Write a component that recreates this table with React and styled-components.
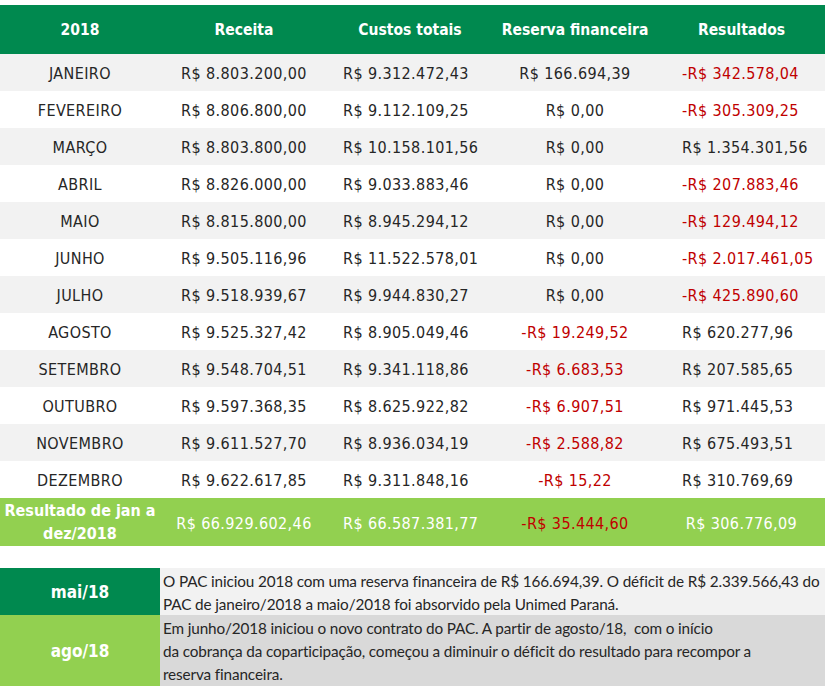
import React from "react";
import styled, { createGlobalStyle } from "styled-components";

const GlobalStyle = createGlobalStyle`
  html, body {
    margin: 0;
    padding: 0;
    background: #ffffff;
  }
`;

const DARK_GREEN = "#00894f";
const LIGHT_GREEN = "#92d050";
const RED = "#c00000";
const TEXT = "#262626";

const Page = styled.div`
  width: 825px;
  padding-top: 5px;
  display: flex;
  flex-direction: column;
  gap: 22px;
`;

const Grid = styled.div`
  display: grid;
  grid-template-columns: 160px 168px 164px 166px 167px;
  font-family: "DejaVu Sans Condensed", "DejaVu Sans", sans-serif;
  font-size: 16px;
  color: ${TEXT};
`;

const HeadCell = styled.div`
  height: 49px;
  background: ${DARK_GREEN};
  color: #ffffff;
  font-weight: bold;
  font-size: 15.5px;
  display: flex;
  align-items: center;
  justify-content: center;
`;

const Cell = styled.div`
  height: ${(p) => (p.$total ? "48px" : "37px")};
  box-sizing: border-box;
  padding-top: 2px;
  background: ${(p) => (p.$total ? LIGHT_GREEN : p.$shade ? "#f2f2f2" : "#ffffff")};
  color: ${(p) => (p.$neg ? RED : p.$total ? "#ffffff" : TEXT)};
  display: flex;
  align-items: center;
  justify-content: ${(p) => (p.$left ? "flex-start" : "center")};
  padding-left: ${(p) => p.$pad || 0}px;
  letter-spacing: 0.4px;
  white-space: nowrap;
`;

const TotalLabel = styled(Cell)`
  font-weight: bold;
  text-align: center;
  white-space: normal;
  line-height: 23px;
  font-size: 16px;
  letter-spacing: 0;
  padding-top: 0;
`;

const Notes = styled.div`
  display: grid;
  grid-template-columns: 160px 665px;
`;

const NoteTag = styled.div`
  background: ${(p) => (p.$light ? LIGHT_GREEN : DARK_GREEN)};
  color: #ffffff;
  font-family: "DejaVu Sans Condensed", "DejaVu Sans", sans-serif;
  font-weight: bold;
  font-size: 17px;
  display: flex;
  align-items: center;
  justify-content: center;
  height: ${(p) => p.$h}px;
`;

const NoteText = styled.div`
  background: ${(p) => (p.$dark ? "#d9d9d9" : "#f2f2f2")};
  color: ${TEXT};
  font-family: Lato, "Open Sans", sans-serif;
  font-size: 15.3px;
  letter-spacing: -0.13px;
  line-height: 23px;
  padding: 2px 0 0 3px;
  height: ${(p) => p.$h}px;
  box-sizing: border-box;
  white-space: nowrap;
`;

const months = [
  ["JANEIRO", "R$ 8.803.200,00", "R$ 9.312.472,43", "R$ 166.694,39", "-R$ 342.578,04"],
  ["FEVEREIRO", "R$ 8.806.800,00", "R$ 9.112.109,25", "R$ 0,00", "-R$ 305.309,25"],
  ["MARÇO", "R$ 8.803.800,00", "R$ 10.158.101,56", "R$ 0,00", "R$ 1.354.301,56"],
  ["ABRIL", "R$ 8.826.000,00", "R$ 9.033.883,46", "R$ 0,00", "-R$ 207.883,46"],
  ["MAIO", "R$ 8.815.800,00", "R$ 8.945.294,12", "R$ 0,00", "-R$ 129.494,12"],
  ["JUNHO", "R$ 9.505.116,96", "R$ 11.522.578,01", "R$ 0,00", "-R$ 2.017.461,05"],
  ["JULHO", "R$ 9.518.939,67", "R$ 9.944.830,27", "R$ 0,00", "-R$ 425.890,60"],
  ["AGOSTO", "R$ 9.525.327,42", "R$ 8.905.049,46", "-R$ 19.249,52", "R$ 620.277,96"],
  ["SETEMBRO", "R$ 9.548.704,51", "R$ 9.341.118,86", "-R$ 6.683,53", "R$ 207.585,65"],
  ["OUTUBRO", "R$ 9.597.368,35", "R$ 8.625.922,82", "-R$ 6.907,51", "R$ 971.445,53"],
  ["NOVEMBRO", "R$ 9.611.527,70", "R$ 8.936.034,19", "-R$ 2.588,82", "R$ 675.493,51"],
  ["DEZEMBRO", "R$ 9.622.617,85", "R$ 9.311.848,16", "-R$ 15,22", "R$ 310.769,69"],
];

const isNeg = (v) => v.startsWith("-");

const App = () => {
  return (
    <Page>
      <GlobalStyle />
      <Grid>
        <HeadCell>2018</HeadCell>
        <HeadCell>Receita</HeadCell>
        <HeadCell>Custos totais</HeadCell>
        <HeadCell>Reserva financeira</HeadCell>
        <HeadCell>Resultados</HeadCell>

        {months.map((row, i) => {
          const shade = i % 2 === 0;
          return (
            <React.Fragment key={row[0]}>
              <Cell $shade={shade}>{row[0]}</Cell>
              <Cell $shade={shade}>{row[1]}</Cell>
              <Cell $shade={shade} $left $pad={15}>{row[2]}</Cell>
              <Cell $shade={shade} $neg={isNeg(row[3])}>{row[3]}</Cell>
              <Cell $shade={shade} $left $pad={24} $neg={isNeg(row[4])}>{row[4]}</Cell>
            </React.Fragment>
          );
        })}

        <TotalLabel $total>Resultado de jan a dez/2018</TotalLabel>
        <Cell $total>R$ 66.929.602,46</Cell>
        <Cell $total $left $pad={15}>R$ 66.587.381,77</Cell>
        <Cell $total $neg>-R$ 35.444,60</Cell>
        <Cell $total>R$ 306.776,09</Cell>
      </Grid>

      <Notes>
        <NoteTag $h={47}>mai/18</NoteTag>
        <NoteText $h={47}>
          O PAC iniciou 2018 com uma reserva financeira de R$ 166.694,39. O déficit de R$ 2.339.566,43 do
          <br />
          PAC de janeiro/2018 a maio/2018 foi absorvido pela Unimed Paraná.
        </NoteText>
        <NoteTag $light $h={71}>ago/18</NoteTag>
        <NoteText $dark $h={71}>
          Em junho/2018 iniciou o novo contrato do PAC. A partir de agosto/18,&nbsp; com o início
          <br />
          da cobrança da coparticipação, começou a diminuir o déficit do resultado para recompor a
          <br />
          reserva financeira.
        </NoteText>
      </Notes>
    </Page>
  );
};

export default App;
